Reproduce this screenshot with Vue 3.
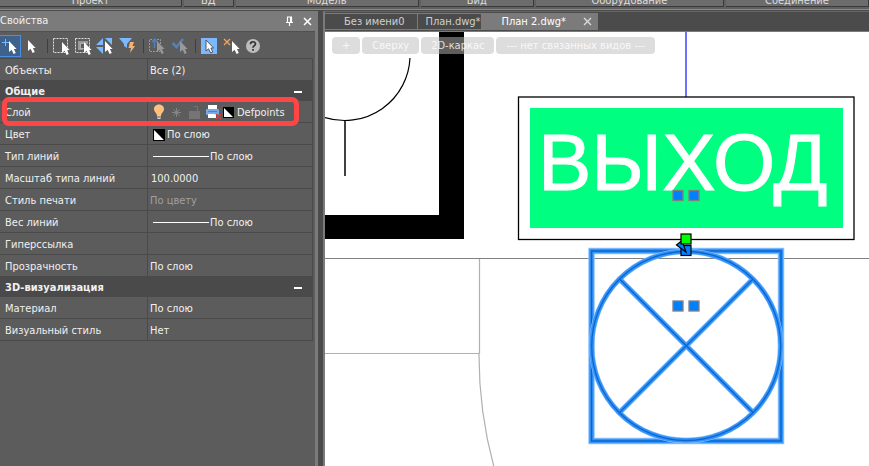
<script setup>
import { ref } from 'vue'

const ribbonGroups = [
  { name: 'Проект', share: 182 },
  { name: 'БД', share: 49 },
  { name: 'Модель', share: 183 },
  { name: 'Вид', share: 113 },
  { name: 'Оборудование', share: 188 },
  { name: 'Соединение', share: 143 },
]

const views = ['+', 'Сверху', '2D-каркас', '--- нет связанных видов ---']

const scale = ref('100.0000')

const general = [
  { label: 'Слой', kind: 'layer', value: 'Defpoints' },
  { label: 'Цвет', kind: 'color', value: 'По слою' },
  { label: 'Тип линий', kind: 'line', value: 'По слою' },
  { label: 'Масштаб типа линий', kind: 'number' },
  { label: 'Стиль печати', kind: 'muted', value: 'По цвету' },
  { label: 'Вес линий', kind: 'line', value: 'По слою' },
  { label: 'Гиперссылка', kind: 'text', value: '' },
  { label: 'Прозрачность', kind: 'text', value: 'По слою' },
]

const visual = [
  { label: 'Материал', value: 'По слою' },
  { label: 'Визуальный стиль', value: 'Нет' },
]
</script>

<template>
  <div class="app">
    <svg class="defs" width="0" height="0" aria-hidden="true">
      <defs>
        <path id="arrow" d="M0 0V11L2.6 8.8L4.6 13L6.8 12L4.9 8H7.6Z" />
        <g id="swatch">
          <rect width="11" height="11" fill="#000" />
          <path d="M1 1L10 10H1Z" fill="#fff" />
        </g>
      </defs>
    </svg>

    <header class="ribbon">
      <div v-for="g in ribbonGroups" :key="g.name" class="group" :style="{ flexGrow: g.share }">
        <span>{{ g.name }}</span>
      </div>
    </header>

    <div class="work">
      <aside class="panel">
        <div class="title">
          <h1>Свойства</h1>
          <button class="bare" aria-label="Закрепить">
            <svg width="9" height="11" viewBox="0 0 9 11"><path d="M2 1H7M2.5 1V6M5.5 1V6M6.5 1V6M1 6.5H8M4.5 7V10" fill="none" stroke="#fff" stroke-width="1.2" /></svg>
          </button>
          <button class="bare" aria-label="Закрыть">
            <svg width="9" height="9" viewBox="0 0 9 9"><path d="M1 1L8 8M8 1L1 8" stroke="#fff" stroke-width="1.5" /></svg>
          </button>
        </div>

        <div class="body">
          <div class="toolbar">
            <button class="tool active" aria-label="Добавить к выбору">
              <svg viewBox="0 0 20 20"><path d="M5.5 3V10M2 6.5H9" stroke="#7ab8ff" /><use href="#arrow" x="9" y="5" fill="#fff" /></svg>
            </button>
            <button class="tool" aria-label="Выбрать">
              <svg viewBox="0 0 20 20"><use href="#arrow" x="6" y="4" fill="#fff" /></svg>
            </button>
            <i class="sep"></i>
            <button class="tool" aria-label="Выбор рамкой">
              <svg viewBox="0 0 20 20"><rect x="1.5" y="2.5" width="14" height="14" fill="none" stroke="#ddd" stroke-dasharray="2 1" /><use href="#arrow" x="10" y="6" fill="#fff" /></svg>
            </button>
            <button class="tool" aria-label="Секущая рамка">
              <svg viewBox="0 0 20 20"><rect x="1.5" y="2.5" width="14" height="14" fill="none" stroke="#ddd" stroke-dasharray="2 1" /><path d="M4 5H14V8H9V14H4Z" fill="#999" /><rect x="6.5" y="7.5" width="5" height="5" fill="#5c5c5c" stroke="#ddd" stroke-dasharray="1 1" /><use href="#arrow" x="10" y="6" fill="#fff" /></svg>
            </button>
            <button class="tool" aria-label="Обратить выбор">
              <svg viewBox="0 0 20 20"><path d="M7 2V9H0ZM0 11H7V18ZM9 2H16V9Z" fill="#7ab8ff" /><use href="#arrow" x="9" y="5" fill="#fff" /></svg>
            </button>
            <button class="tool" aria-label="Быстрый выбор">
              <svg viewBox="0 0 20 20"><path d="M1 2H14L9 8V12L6 10V8Z" fill="#7ab8ff" /><path d="M12 6H16L14.5 10H17L12 17L13 12H10.5Z" fill="#f5b073" /></svg>
            </button>
            <i class="sep"></i>
            <button class="tool" aria-label="Поднять выбор" disabled>
              <svg viewBox="0 0 20 20"><path d="M4 3.5H1.5V15.5H12M9 3.5H12.5V8" fill="none" stroke="#999" stroke-dasharray="2 1" /><path d="M6.5 12V3M4 6L6.5 3L9 6" fill="none" stroke="#5580b5" stroke-width="1.5" /><use href="#arrow" x="9" y="5" fill="#999" /></svg>
            </button>
            <button class="tool" aria-label="Применить" disabled>
              <svg viewBox="0 0 20 20"><path d="M2.5 7L6.5 11L13 3" fill="none" stroke="#5580b5" stroke-width="2.6" /><use href="#arrow" x="10" y="5" fill="#999" /></svg>
            </button>
            <i class="sep"></i>
            <button class="tool" aria-label="Режим выбора">
              <svg viewBox="0 0 20 20"><rect x="1" y="2" width="16" height="16" fill="#7ab8ff" /><use href="#arrow" x="6" y="4" fill="#fff" stroke="#555" stroke-width="1" /></svg>
            </button>
            <button class="tool" aria-label="Снять выбор">
              <svg viewBox="0 0 20 20"><path d="M2 3L8 9M8 3L2 9" stroke="#f5a55c" stroke-width="1.3" /><use href="#arrow" x="10" y="5" fill="#fff" /></svg>
            </button>
            <button class="tool" aria-label="Справка">
              <svg viewBox="0 0 20 20"><circle cx="9" cy="10" r="7" fill="#bdbdbd" /><path d="M6.5 8.2C6.5 5 11.5 5 11.5 8C11.5 9.8 9 9.6 9 11.8M9 13V14.7" fill="none" stroke="#333" stroke-width="1.7" /></svg>
            </button>
          </div>

          <table class="props">
            <colgroup><col class="name" /><col /></colgroup>
            <tbody>
              <tr><th scope="row">Объекты</th><td>Все (2)</td></tr>
            </tbody>
            <tbody>
              <tr class="section">
                <th colspan="2" scope="rowgroup"><div>Общие<button class="fold" aria-label="Свернуть: Общие"></button></div></th>
              </tr>
              <tr v-for="r in general" :key="r.label">
                <th scope="row" :class="{ marked: r.kind === 'layer' }"><label v-if="r.kind === 'number'" for="scale">{{ r.label }}</label><template v-else>{{ r.label }}</template></th>
                <td :class="r.kind">
                  <div v-if="r.kind === 'layer'" class="cell layer-cell">
                    <svg width="81" height="18" viewBox="0 0 81 18" aria-hidden="true">
                      <path d="M4 12C4 9 1 8 1 5C1 -1 11 -1 11 5C11 8 8 9 8 12Z" fill="#ffc07f" />
                      <path d="M4 13H8M4.5 14.5H7.5" stroke="#d8d8d8" stroke-width="1" />
                      <path d="M23.5 4V13M19 8.5H28M20.5 5.5L26.5 11.5M26.5 5.5L20.5 11.5" stroke="#858585" />
                      <rect x="36" y="7" width="11" height="8" fill="#757575" /><path d="M40.5 2.5H44.5V7" fill="none" stroke="#757575" />
                      <rect x="55" y="1" width="9" height="5" fill="#fff" /><rect x="53" y="5" width="13" height="6" rx="1" fill="#76a9ea" /><path d="M55 7.5H64" stroke="#4f83c6" /><rect x="55" y="10" width="8" height="4" fill="#fff" />
                      <path d="M63 10L68 15M68 10L63 15" stroke="#e03b3b" stroke-width="1.7" />
                      <use href="#swatch" x="70" y="3" />
                    </svg>
                    <span>{{ r.value }}</span>
                  </div>
                  <div v-else-if="r.kind === 'color'" class="cell color-cell">
                    <svg width="12" height="12" viewBox="0 0 11 11" aria-hidden="true"><use href="#swatch" /></svg>
                    <span>{{ r.value }}</span>
                  </div>
                  <div v-else-if="r.kind === 'line'" class="cell"><i class="stroke"></i><span>{{ r.value }}</span></div>
                  <input v-else-if="r.kind === 'number'" id="scale" v-model="scale" type="text" />
                  <template v-else>{{ r.value }}</template>
                </td>
              </tr>
            </tbody>
            <tbody>
              <tr class="section">
                <th colspan="2" scope="rowgroup"><div>3D-визуализация<button class="fold" aria-label="Свернуть: 3D-визуализация"></button></div></th>
              </tr>
              <tr v-for="r in visual" :key="r.label"><th scope="row">{{ r.label }}</th><td>{{ r.value }}</td></tr>
            </tbody>
          </table>
        </div>
      </aside>

      <main class="docs">
        <nav class="tabs">
          <button class="tab first">Без имени0</button>
          <button class="tab">План.dwg*</button>
          <div class="tab current">
            <button class="bare">План 2.dwg*</button>
            <button class="bare close" aria-label="Закрыть вкладку">
              <svg width="9" height="9" viewBox="0 0 9 9"><path d="M1 1L8 8M8 1L1 8" stroke="#ddd" stroke-width="1.3" /></svg>
            </button>
          </div>
        </nav>

        <div class="canvas">
          <svg class="drawing" viewBox="325 32 544 434" preserveAspectRatio="xMinYMin meet">
            <path d="M439 32H464V239H325V215H439Z" fill="#000" />
            <path d="M410 58A65.5 65.5 0 0 1 325 117.5" fill="none" stroke="#000" stroke-width="1.2" />
            <path d="M345 120V176" stroke="#000" stroke-width="1.5" />
            <path d="M325 258.5H869" stroke="#808080" />
            <path d="M479.5 259V353.5H325M479 353.5A427 427 0 0 0 493.7 466" fill="none" stroke="#b0b0b0" stroke-width="1.2" />
            <path d="M686 32V97" stroke="#4040ff" stroke-width="1.5" />

            <rect x="518.5" y="97" width="335.5" height="142.5" fill="none" stroke="#000" stroke-width="1.3" />
            <rect x="530" y="108" width="313" height="120" fill="#00ff80" />
            <text x="538" y="190" class="exit">ВЫХОД</text>

            <g v-for="p in [['#8fc5ff', 6.5], ['#3594fb', 4.5], ['#0c66cc', 1.5]]" :key="p[1]" fill="none" :stroke="p[0]" :stroke-width="p[1]">
              <rect x="591.5" y="251" width="189.5" height="190" />
            </g>
            <g v-for="p in [['#8fc5ff', 5.5], ['#3594fb', 4.5], ['#0c66cc', 1.3]]" :key="p[1] + 10" fill="none" :stroke="p[0]" :stroke-width="p[1]">
              <circle cx="686.2" cy="346" r="94.5" />
              <path d="M619.5 279L753 412.5M753 279L619.5 412.5" />
            </g>

            <g fill="#0080ff" stroke="#808080" stroke-width="1.3">
              <rect x="673" y="190.5" width="10" height="10" /><rect x="689" y="190.5" width="10" height="10" />
              <rect x="673" y="301" width="10" height="10" /><rect x="689" y="301" width="10" height="10" />
            </g>
            <g fill="#0080ff" stroke="#000" stroke-width="1.2">
              <rect x="681" y="245.5" width="10" height="10" />
              <path d="M676.5 245L682 240.5L686 252Z" />
              <rect x="681" y="234" width="10" height="10" fill="#00ff00" />
            </g>
          </svg>
          <div class="views">
            <button v-for="v in views" :key="v" class="view">{{ v }}</button>
          </div>
        </div>
      </main>
    </div>
  </div>
</template>

<style>
body {
  margin: 0;
  background: #4b4b4b;
}
</style>

<style scoped>
.app {
  display: flex;
  flex-direction: column;
  min-height: 100vh;
  overflow: hidden;
  background: #4b4b4b;
  color: #f0f0f0;
  font: 11px/14px "DejaVu Sans Condensed", "Noto Sans", sans-serif;
}
.defs { position: absolute; }
button, input {
  margin: 0;
  padding: 0;
  border: 0;
  background: none;
  color: inherit;
  font: inherit;
}
svg { display: block; flex: none; }

.ribbon {
  display: flex;
  gap: 2px;
  height: 9px;
  background: #606060;
  border-bottom: 1px solid #8a8a8a;
}
.group {
  display: flex;
  flex: 1 1 0;
  align-items: flex-end;
  justify-content: center;
  height: 6px;
  background: #6c6c6c;
  border-right: 1px solid #3a3a3a;
  border-bottom: 1px solid #3a3a3a;
  overflow: hidden;
  color: #dedede;
}
.group span { margin-bottom: -2px; white-space: nowrap; }

.work {
  display: flex;
  flex: 1;
  padding-top: 1px;
}
.panel {
  display: flex;
  flex: none;
  flex-direction: column;
  width: 318px;
  background: #7b7b7b;
}
.title {
  display: flex;
  align-items: center;
  gap: 7px;
  height: 20px;
  padding-right: 5px;
}
.title h1 {
  flex: 1;
  margin: 0;
  font-size: 11px;
  font-weight: 400;
}
.title .bare { padding: 1px; }
.body {
  flex: 1;
  margin-right: 3px;
  background: #5c5c5c;
  border-top: 1px solid #505050;
}
.toolbar {
  display: flex;
  align-items: center;
  gap: 2px;
  height: 22px;
  padding: 3px 0 1px;
}
.tool { width: 20px; height: 20px; }
.tool svg { width: 20px; height: 20px; }
.tool.active {
  background: #40618a;
  box-shadow: 0 0 0 1px #4a90e2;
}
.sep {
  width: 6px;
  height: 14px;
  background: linear-gradient(#3f3f3f, #3f3f3f) center / 1px 100% no-repeat;
}

.props {
  width: 313px;
  table-layout: fixed;
  border-collapse: separate;
  border-spacing: 0;
  border-top: 1px solid #4a4a4a;
}
.name { width: 148px; }
.props th, .props td {
  box-sizing: border-box;
  height: 22px;
  padding: 2px 0 0 5px;
  border-right: 1px solid #4a4a4a;
  border-bottom: 1px solid #4a4a4a;
  font-weight: 400;
  text-align: left;
  white-space: nowrap;
}
.props td { padding-left: 2px; }
.props .section th {
  height: 20px;
  background: #4a4a4a;
  font-weight: 700;
}
.section div {
  display: flex;
  align-items: center;
  justify-content: space-between;
  padding-right: 10px;
}
.fold {
  width: 8px;
  height: 2px;
  background: #fff;
}
.props .muted { color: #a0a0a0; }
.props .number { padding-left: 3px; }
.props input { display: block; width: 100%; }
.cell { display: flex; align-items: center; }
.layer-cell { gap: 3px; padding-left: 3px; }
.color-cell { gap: 2px; padding-left: 3px; }
.stroke {
  width: 56px;
  height: 1px;
  margin: 0 1px 0 3px;
  background: #fff;
}
.marked { position: relative; }
.marked::after {
  content: "";
  position: absolute;
  inset: -4px -152px -4px 2px;
  border: 5px solid #ff4545;
  border-radius: 7px;
}

.docs {
  display: flex;
  flex: 1;
  flex-direction: column;
  min-width: 0;
  margin-left: 5px;
  border-top: 1px solid #666;
  border-left: 2px solid #7b7b7b;
}
.tabs {
  display: flex;
  align-items: stretch;
  height: 17px;
  padding: 1px 0;
  border-bottom: 1px solid #7b7b7b;
}
.tab {
  box-sizing: border-box;
  padding: 0 0 0 7px;
  border: 1px solid #7b7b7b;
  border-left: 0;
  color: #d0d0d0;
  line-height: 16px;
  white-space: nowrap;
}
.tab.first { padding: 0 13px 0 19px; }
.tab:nth-child(2) { border-right: 0; }
.tab.current {
  display: flex;
  align-items: center;
  gap: 17px;
  padding: 0 5px 0 21px;
  background: #7b7b7b;
  color: #fff;
}
.canvas {
  position: relative;
  flex: 1;
  background: #fff;
}
.drawing {
  position: absolute;
  inset: 0;
  width: 100%;
  height: 100%;
}
.exit {
  fill: #fff;
  stroke: #fff;
  stroke-width: 1px;
  font: 80px "Liberation Sans", sans-serif;
}
.views {
  position: relative;
  display: flex;
  gap: 2px;
  padding: 5px 7px;
}
.view {
  height: 17px;
  padding: 0 10px;
  border-radius: 4px;
  background: rgba(188, 188, 188, 0.5);
  color: rgba(255, 255, 255, 0.8);
  line-height: 17px;
  white-space: nowrap;
}
</style>
